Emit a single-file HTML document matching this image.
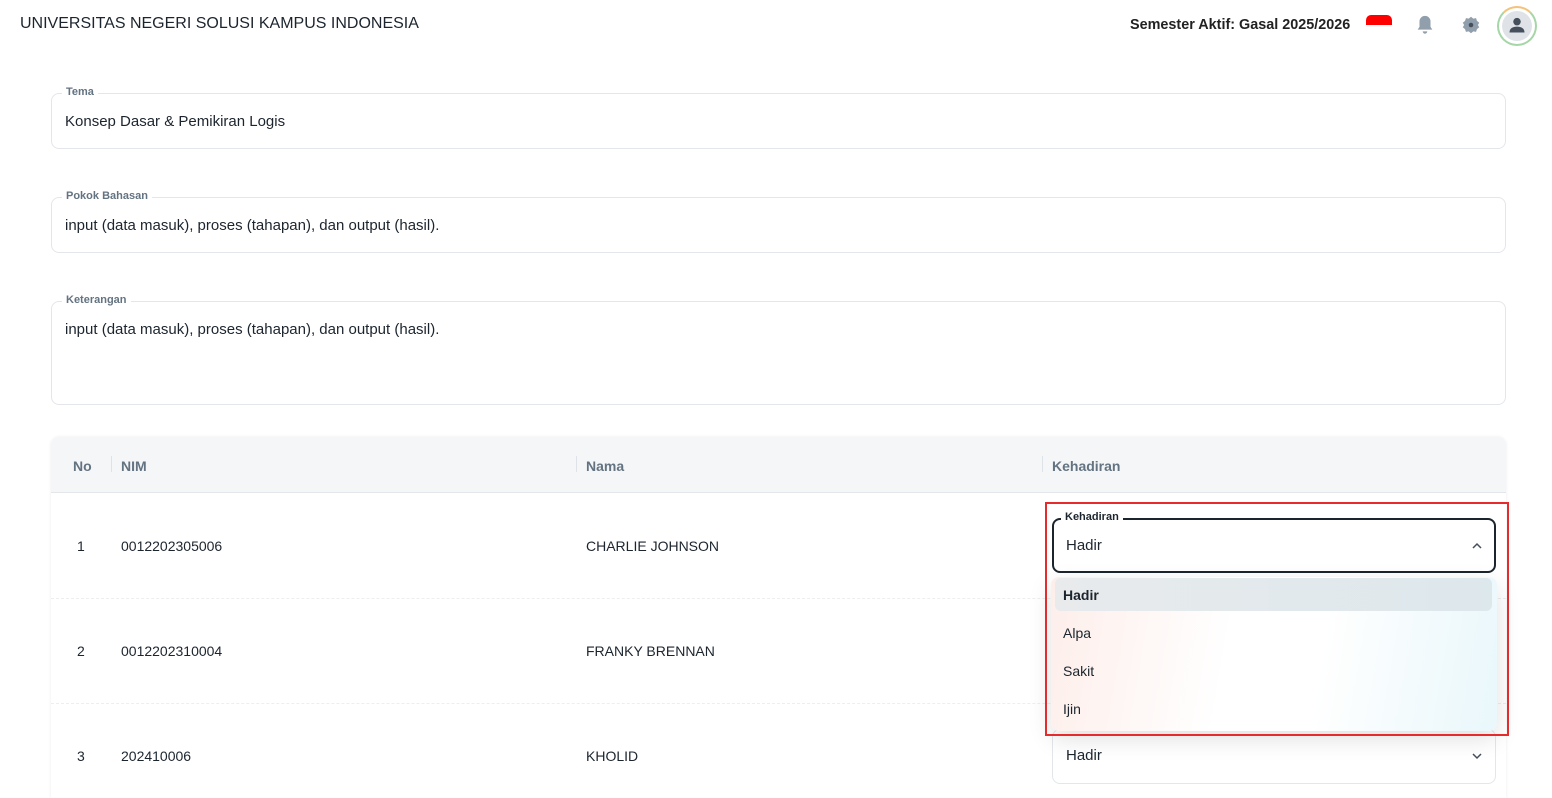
<!DOCTYPE html><html><head><style>
body{margin:0;width:1552px;height:798px;overflow:hidden;background:#fff;font-family:"Liberation Sans",sans-serif;color:#1c252e;position:relative}
.a{position:absolute}
.fs{position:absolute;border:1px solid #e3e6ea;border-radius:8px;left:51px;width:1453px}
.lg{position:absolute;top:-8px;left:10px;background:#fff;padding:0 4px;font-size:11px;color:#637381;font-weight:bold}
.val{position:absolute;left:13px;font-size:15px}
.th{position:absolute;top:458px;font-size:14px;color:#637381;font-weight:bold}
.td{position:absolute;font-size:14px}
.sep{position:absolute;top:456px;width:1px;height:16px;background:#dfe3e8}
.opt{position:absolute;left:1063px;font-size:14px}
</style></head><body>
<div class="a" style="left:20px;top:15px;font-size:16px;">UNIVERSITAS NEGERI SOLUSI KAMPUS INDONESIA</div>
<div class="a" style="left:1130px;top:17px;font-size:14.4px;font-weight:bold;color:#222">Semester Aktif: Gasal 2025/2026</div>
<div class="a" style="left:1366px;top:15px;width:26px;height:10px;background:#f00;border-radius:5px 5px 0 0"></div>
<svg class="a" style="left:1414px;top:14px" width="22" height="22" viewBox="0 0 24 24"><path d="M12 2a6 6 0 0 0-6 6v6l-2 3h16l-2-3V8a6 6 0 0 0-6-6zM9.5 19a2.5 2.5 0 0 0 5 0z" fill="#919eab"/></svg>
<svg class="a" style="left:1460px;top:14px" width="22" height="22" viewBox="0 0 24 24"><path d="M12 3l2.5 2 3-.5 1 3 2.5 2-1.5 2.5 1.5 2.5-2.5 2-1 3-3-.5L12 21l-2.5-2-3 .5-1-3L3 14.5 4.5 12 3 9.5l2.5-2 1-3 3 .5z" fill="#919eab"/><circle cx="12" cy="12" r="2.5" fill="#454f5b"/></svg>
<div class="a" style="left:1497px;top:6px;width:36px;height:36px;border-radius:50%;border:2px solid #a5d6a7;border-top-color:#f5c27a;background:#fff"><div style="position:absolute;left:3px;top:3px;width:30px;height:30px;border-radius:50%;background:#dfe3e8"></div>
<svg class="a" style="left:8px;top:7px" width="20" height="20" viewBox="0 0 24 24"><circle cx="12" cy="8" r="4.5" fill="#454f5b"/><path d="M3 21c0-5 4-7 9-7s9 2 9 7z" fill="#454f5b"/></svg></div>

<div class="fs" style="top:93px;height:54px"><div class="lg">Tema</div><div class="val" style="top:19px">Konsep Dasar &amp; Pemikiran Logis</div></div>
<div class="fs" style="top:197px;height:54px"><div class="lg">Pokok Bahasan</div><div class="val" style="top:19px">input (data masuk), proses (tahapan), dan output (hasil).</div></div>
<div class="fs" style="top:301px;height:102px"><div class="lg">Keterangan</div><div class="val" style="top:19px">input (data masuk), proses (tahapan), dan output (hasil).</div></div>

<div class="a" style="left:51px;top:437px;width:1455px;height:361px;border-radius:8px 8px 0 0;box-shadow:0 0 3px rgba(0,0,0,.08)"></div>
<div class="a" style="left:51px;top:437px;width:1455px;height:55px;background:#f4f6f8;border-bottom:1px solid #e3e6ea;border-radius:8px 8px 0 0"></div>
<div class="th" style="left:73px">No</div><div class="sep" style="left:111px"></div>
<div class="th" style="left:121px">NIM</div><div class="sep" style="left:576px"></div>
<div class="th" style="left:586px">Nama</div><div class="sep" style="left:1042px"></div>
<div class="th" style="left:1052px">Kehadiran</div>
<div class="a" style="left:51px;top:598px;width:1455px;border-top:1px dashed #eceef0"></div>
<div class="a" style="left:51px;top:703px;width:1455px;border-top:1px dashed #eceef0"></div>
<div class="td" style="left:77px;top:538px">1</div><div class="td" style="left:121px;top:538px">0012202305006</div><div class="td" style="left:586px;top:538px">CHARLIE JOHNSON</div>
<div class="td" style="left:77px;top:643px">2</div><div class="td" style="left:121px;top:643px">0012202310004</div><div class="td" style="left:586px;top:643px">FRANKY BRENNAN</div>
<div class="td" style="left:77px;top:748px">3</div><div class="td" style="left:121px;top:748px">202410006</div><div class="td" style="left:586px;top:748px">KHOLID</div>

<div class="a" style="left:1052px;top:729px;width:442px;height:53px;border:1px solid #e3e6ea;border-radius:8px"></div>
<div class="td" style="left:1066px;top:747px;font-size:15px">Hadir</div>
<svg class="a" style="left:1470px;top:750px" width="14" height="12" viewBox="0 0 14 12"><path d="M3 4l4 4 4-4" stroke="#454f5b" stroke-width="1.5" fill="none"/></svg>

<div class="a" style="left:1052px;top:518px;width:440px;height:51px;border:2px solid #1c252e;border-radius:8px;background:#fff"></div>
<div class="a" style="left:1061px;top:511px;background:#fff;padding:0 4px;font-size:11px;font-weight:bold">Kehadiran</div>
<div class="td" style="left:1066px;top:537px;font-size:15px">Hadir</div>
<svg class="a" style="left:1470px;top:540px" width="14" height="12" viewBox="0 0 14 12"><path d="M3 8l4-4 4 4" stroke="#454f5b" stroke-width="1.5" fill="none"/></svg>

<div class="a" style="left:1051px;top:577px;width:446px;height:154px;border-radius:8px;background:linear-gradient(100deg,#fdeeea 0%,#fff 40%,#fff 60%,#e9f7fb 100%);box-shadow:0 8px 24px rgba(0,0,0,.12)"></div>
<div class="a" style="left:1055px;top:578px;width:437px;height:33px;border-radius:6px;background:linear-gradient(90deg,#e8eaec,#dde8ec)"></div>
<div class="opt" style="top:587px;font-weight:bold">Hadir</div>
<div class="opt" style="top:625px">Alpa</div>
<div class="opt" style="top:663px">Sakit</div>
<div class="opt" style="top:701px">Ijin</div>
<div class="a" style="left:1045px;top:502px;width:460px;height:230px;border:2px solid #e52b2b"></div>
</body></html>
